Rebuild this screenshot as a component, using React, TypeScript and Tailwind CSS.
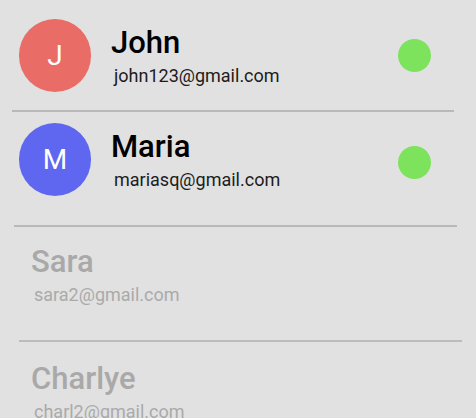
import React from 'react'

type Contact = {
  name: string
  email: string
  initial?: string
  color?: string
  online?: boolean
}

function Row({ c, faded, dotLow }: { c: Contact; faded?: boolean; dotLow?: boolean }) {
  return (
    <div className="flex items-center">
      {c.initial ? (
        <div
          className={`w-[72px] h-[73px] rounded-full flex items-center justify-center text-white text-[28px] shrink-0 ${c.color}`}
        >
          {c.initial}
        </div>
      ) : null}
      <div className={`flex flex-col ${c.initial ? 'ml-5 pt-[2px]' : ''}`}>
        <span className={`text-[31px] leading-[30px] font-medium ${faded ? 'text-[#a9a9a9]' : 'text-black'}`}>{c.name}</span>
        <span className={`text-[18px] leading-[20px] mt-[8px] ml-[3px] ${faded ? 'text-[#aaaaaa]' : 'text-[#1c1c1c]'}`}>{c.email}</span>
      </div>
      {c.online ? (
        <div className={`ml-auto mr-[45px] w-[33px] h-[33px] rounded-full bg-[#7de35c] ${dotLow ? 'mt-[6px]' : ''}`} />
      ) : null}
    </div>
  )
}

export default function App() {
  return (
    <div className="w-[476px] h-[418px] overflow-hidden bg-[#e1e1e1] font-['Roboto',sans-serif]">
      <div className="pl-[19px] pt-[19px] pb-[18px]">
        <Row c={{ name: 'John', email: 'john123@gmail.com', initial: 'J', color: 'bg-[#e96c66]', online: true }} />
      </div>
      <div className="ml-[12px] w-[442px] h-[2px] bg-[#b9b9b9]" />
      <div className="pl-[19px] pt-[11px] pb-[29px]">
        <Row c={{ name: 'Maria', email: 'mariasq@gmail.com', initial: 'M', color: 'bg-[#5f67f0]', online: true }} dotLow />
      </div>
      <div className="ml-[14px] w-[443px] h-[2px] bg-[#b9b9b9]" />
      <div className="pl-[31px] pt-[20px] pb-[35px]">
        <Row c={{ name: 'Sara', email: 'sara2@gmail.com' }} faded />
      </div>
      <div className="ml-[19px] w-[443px] h-[2px] bg-[#bcbcbc]" />
      <div className="pl-[31px] pt-[22px]">
        <Row c={{ name: 'Charlye', email: 'charl2@gmail.com' }} faded />
      </div>
    </div>
  )
}
